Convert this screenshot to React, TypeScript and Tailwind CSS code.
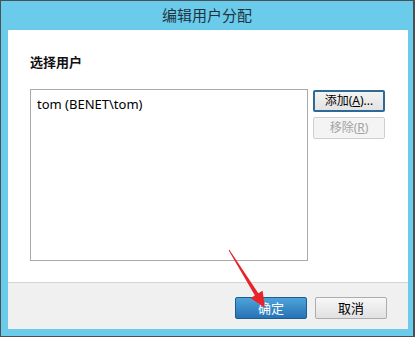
import React from 'react';

const font = { fontFamily: '"Noto Sans", "Noto Sans CJK SC", sans-serif' };

function Arrow() {
  // red annotation arrow pointing at the OK button
  return (
    <svg className="absolute left-0 top-0 pointer-events-none" width="415" height="338" viewBox="0 0 415 338">
      <polygon
        points="229.4,249.7 258.3,293.3 262.6,290.7 265,308 250.6,298.1 254.9,295.5 228.6,250.3"
        fill="#e8242b"
      />
    </svg>
  );
}

export default function App() {
  return (
    <div
      className="relative w-[415px] h-[338px] bg-white text-black text-[13px]"
      style={font}
    >
      <div className="w-[415px] h-[337px] flex flex-col bg-[#6bcbea] border-t border-l border-b border-r-2 border-[#4b5055]">
        {/* Title */}
        <div className="h-[29px] flex items-center justify-center text-[15px] text-[#1d3340]">
          编辑用户分配
        </div>

        {/* Body */}
        <div className="ml-[7px] mr-[5px] flex flex-col">
          <div className="h-[252px] bg-white pl-[22px] pr-[22px] pt-[23px] flex flex-col">
            <div className="text-[13px] font-bold leading-[18px] text-[#111]">选择用户</div>
            <div className="mt-[18px] flex gap-[5px]">
              <div className="w-[278px] h-[172px] border border-[#a9a9a9] pl-[6px] pt-[5px] leading-[18px]">
                tom (BENET\tom)
              </div>
              <div className="flex flex-col gap-[5px] pt-[1px]">
                <button className="w-[72px] h-[22px] rounded-[2px] border-2 border-[#2e6a98] bg-gradient-to-b from-[#f3f3f3] to-[#e3e3e3] text-[12px] leading-none flex items-center justify-center">
                  添加(<span className="underline">A</span>)...
                </button>
                <button className="w-[72px] h-[22px] rounded-[2px] border border-[#cfcfcf] bg-[#f4f4f4] text-[12px] text-[#a3a3a3] leading-none flex items-center justify-center">
                  移除(<span className="underline">R</span>)
                </button>
              </div>
            </div>
          </div>

          {/* Footer */}
          <div className="h-[47px] border-t border-[#d5d5d5] bg-[#f0f0f0] flex justify-end gap-[8px] pt-[14px] pr-[21px]">
            <button className="w-[72px] h-[22px] rounded-[2px] border border-[#1d5c92] bg-gradient-to-b from-[#4ea3da] to-[#2673b6] text-white text-[13px] leading-none flex items-center justify-center">
              确定
            </button>
            <button className="w-[72px] h-[22px] rounded-[2px] border border-[#adadad] bg-gradient-to-b from-[#f7f7f7] to-[#e1e1e1] text-[13px] leading-none flex items-center justify-center">
              取消
            </button>
          </div>
        </div>
      </div>
      <Arrow />
    </div>
  );
}
